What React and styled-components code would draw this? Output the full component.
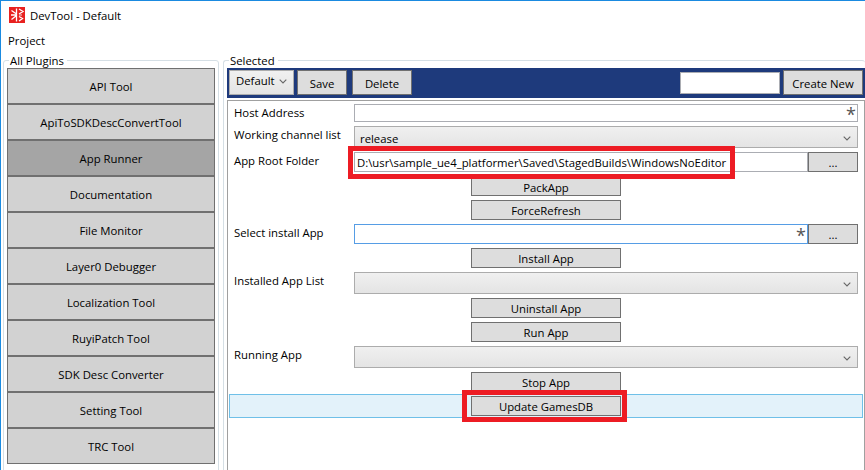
import React from 'react';
import styled, { createGlobalStyle } from 'styled-components';

const Global = createGlobalStyle`
  html, body { margin: 0; padding: 0; overflow: hidden; background: #fff; }
  * { box-sizing: border-box; }
`;

const FONT = '"Open Sans", "Noto Sans", sans-serif';

const Window = styled.div`
  width: 865px;
  height: 470px;
  overflow: hidden;
  position: relative;
  background: #fff;
  border-top: 1px solid #1a8ae0;
  border-left: 1px solid #1a8ae0;
  font-family: ${FONT};
  font-size: 11.35px;
  color: #000;
  display: flex;
  flex-direction: column;
`;

const TitleBar = styled.div`
  height: 28px;
  flex: none;
  display: flex;
  align-items: center;
  gap: 5px;
  padding-left: 8px;
`;

const MenuBar = styled.div`
  height: 24px;
  flex: none;
  padding: 3px 0 0 7px;
  line-height: 18px;
`;

const Content = styled.div`
  flex: 1;
  display: flex;
  gap: 4px;
  padding: 7px 0 0 2px;
  min-height: 0;
`;

const Group = styled.div`
  position: relative;
  flex: ${p => (p.$grow ? '1' : 'none')};
  width: ${p => (p.$grow ? 'auto' : '216px')};
  min-width: 0;
  height: 420px;
  border: 1px solid #d5dfe5;
  border-radius: 3px 3px 0 0;
  border-right-width: ${p => (p.$grow ? '0' : '1px')};
  padding: 7px 0 0 3px;
`;

const Legend = styled.span`
  position: absolute;
  top: -8px;
  left: 5px;
  padding: 0 3px 0 1px;
  background: #fff;
  line-height: 15px;
`;

const PluginList = styled.div`
  width: 208px;
  display: flex;
  flex-direction: column;
`;

const PluginButton = styled.div`
  height: 36px;
  display: flex;
  align-items: center;
  justify-content: center;
  background: ${p => (p.$active ? '#a5a5a5' : '#d2d2d2')};
  border: 1px solid #707070;
`;

const Toolbar = styled.div`
  height: 30px;
  background: #1e3a7c;
  display: flex;
  align-items: flex-start;
  padding: 2px 2px 0 2px;
`;

const ToolSelect = styled.div`
  width: 65px;
  height: 25px;
  position: relative;
  padding: 2px 0 0 6px;
  line-height: 15px;
  background: linear-gradient(#f0f0f0, #e4e4e4);
  border: 1px solid #acacac;
  margin-right: 3px;
`;

const ToolChevron = styled.span`
  position: absolute;
  right: 6px;
  top: 8px;
  display: flex;
`;

const ToolButton = styled.div`
  height: 25px;
  width: ${p => p.$w}px;
  margin-right: ${p => p.$mr || 0}px;
  display: flex;
  align-items: center;
  justify-content: center;
  padding-top: 1px;
  background: #dddddd;
  border: 1px solid #707070;
`;

const NameInput = styled.div`
  width: 100px;
  height: 22px;
  margin: 2px 3px 0 auto;
  background: #fff;
  border: 1px solid #abadb3;
`;

const Panel = styled.div`
  position: relative;
  margin-top: 2px;
  height: 380px;
  border: 1px solid #a0a0a0;
  border-bottom: 0;
  padding: 3px 6px 0 1px;
  display: flex;
  flex-direction: column;
`;

const Row = styled.div`
  display: grid;
  grid-template-columns: 120px 1fr;
  align-items: start;
  margin-top: ${p => p.$mt ?? 4}px;
  padding-left: 5px;
`;

const Label = styled.div`
  line-height: 18px;
`;

const Field = styled.div`
  display: flex;
  height: ${p => p.$h || 20}px;
`;

const TextBox = styled.div`
  flex: 1;
  min-width: 0;
  position: relative;
  display: flex;
  align-items: center;
  padding-left: 2px;
  background: #fff;
  border: 1px solid ${p => (p.$focus ? '#569de5' : '#abadb3')};
  white-space: nowrap;
`;

const Star = styled.span`
  position: absolute;
  right: 1px;
  top: ${p => p.$top ?? 0}px;
  font-size: 18px;
  line-height: 18px;
  color: #555;
`;

const Combo = styled.div`
  flex: 1;
  display: flex;
  align-items: center;
  justify-content: space-between;
  padding: 2px 6px 0 5px;
  background: linear-gradient(#f0f0f0, #e4e4e4);
  border: 1px solid #acacac;
`;

const Browse = styled.div`
  width: 50px;
  display: flex;
  align-items: center;
  justify-content: center;
  background: #dddddd;
  border: 1px solid #707070;
`;

const ActionRow = styled.div`
  display: flex;
  justify-content: center;
  margin-top: ${p => p.$mt ?? 4}px;
  margin-left: 5px;
`;

const ActionButton = styled.div`
  width: 150px;
  height: ${p => p.$h || 20}px;
  display: flex;
  align-items: center;
  justify-content: center;
  background: #dddddd;
  border: 1px solid #707070;
`;

const UpdateRow = styled.div`
  margin: 2px -5px 0 0;
  height: 24px;
  display: flex;
  align-items: center;
  justify-content: center;
  background: #e3f2fa;
  border: 1px solid #6fc0e8;
`;

const Callout = styled.div`
  position: absolute;
  left: ${p => p.$x}px;
  top: ${p => p.$y}px;
  width: ${p => p.$w}px;
  height: ${p => p.$h}px;
  border: 5px solid #ed1c24;
  pointer-events: none;
`;

const Chevron = () => (
  <svg width="8" height="5" viewBox="0 0 8 5" fill="none">
    <path d="M.7.7L4 4l3.3-3.3" stroke="#666" strokeWidth="1.1" />
  </svg>
);

const Logo = () => (
  <svg width="16" height="16" viewBox="0 0 16 16">
    <rect width="16" height="16" fill="#e8211f" />
    <path
      d="M7.5 1.5v13M2.5 3.5l5 3.5M2 8h5.5M2.5 12.5l5-4M10 2l4 2.5-4 2.5M10 14l3.5-2.5L10 9.5"
      stroke="#fff"
      strokeWidth="1.3"
      fill="none"
    />
    <path d="M10 8h3" stroke="#e6b4b4" strokeWidth="1.3" />
  </svg>
);

const plugins = [
  'API Tool',
  'ApiToSDKDescConvertTool',
  'App Runner',
  'Documentation',
  'File Monitor',
  'Layer0 Debugger',
  'Localization Tool',
  'RuyiPatch Tool',
  'SDK Desc Converter',
  'Setting Tool',
  'TRC Tool',
];

export default function App() {
  return (
    <>
      <Global />
      <Window>
        <TitleBar>
          <Logo />
          <span>DevTool - Default</span>
        </TitleBar>
        <MenuBar>Project</MenuBar>
        <Content>
          <Group>
            <Legend>All Plugins</Legend>
            <PluginList>
              {plugins.map(name => (
                <PluginButton key={name} $active={name === 'App Runner'}>
                  {name}
                </PluginButton>
              ))}
            </PluginList>
          </Group>
          <Group $grow>
            <Legend>Selected</Legend>
            <Toolbar>
              <ToolSelect>
                Default
                <ToolChevron><Chevron /></ToolChevron>
              </ToolSelect>
              <ToolButton $w={50} $mr={5}>Save</ToolButton>
              <ToolButton $w={60}>Delete</ToolButton>
              <NameInput />
              <ToolButton $w={80}>Create New</ToolButton>
            </Toolbar>
            <Panel>
              <Row $mt={0}>
                <Label>Host Address</Label>
                <Field $h={18}>
                  <TextBox><Star $top={0}>*</Star></TextBox>
                </Field>
              </Row>
              <Row>
                <Label>Working channel list</Label>
                <Field $h={22}>
                  <Combo><span>release</span><Chevron /></Combo>
                </Field>
              </Row>
              <Row>
                <Label>App Root Folder</Label>
                <Field>
                  <TextBox>D:\usr\sample_ue4_platformer\Saved\StagedBuilds\WindowsNoEditor</TextBox>
                  <Browse>...</Browse>
                </Field>
              </Row>
              <ActionRow $mt={6}><ActionButton $h={18}>PackApp</ActionButton></ActionRow>
              <ActionRow><ActionButton>ForceRefresh</ActionButton></ActionRow>
              <Row>
                <Label>Select install App</Label>
                <Field>
                  <TextBox $focus><Star $top={1}>*</Star></TextBox>
                  <Browse>...</Browse>
                </Field>
              </Row>
              <ActionRow><ActionButton>Install App</ActionButton></ActionRow>
              <Row>
                <Label>Installed App List</Label>
                <Field $h={22}><Combo><span /><Chevron /></Combo></Field>
              </Row>
              <ActionRow><ActionButton>Uninstall App</ActionButton></ActionRow>
              <ActionRow><ActionButton>Run App</ActionButton></ActionRow>
              <Row>
                <Label>Running App</Label>
                <Field $h={22}><Combo><span /><Chevron /></Combo></Field>
              </Row>
              <ActionRow><ActionButton>Stop App</ActionButton></ActionRow>
              <UpdateRow><ActionButton>Update GamesDB</ActionButton></UpdateRow>
              <Callout $x={120} $y={45} $w={387} $h={33} />
              <Callout $x={234} $y={289} $w={165} $h={32} />
            </Panel>
          </Group>
        </Content>
      </Window>
    </>
  );
}
